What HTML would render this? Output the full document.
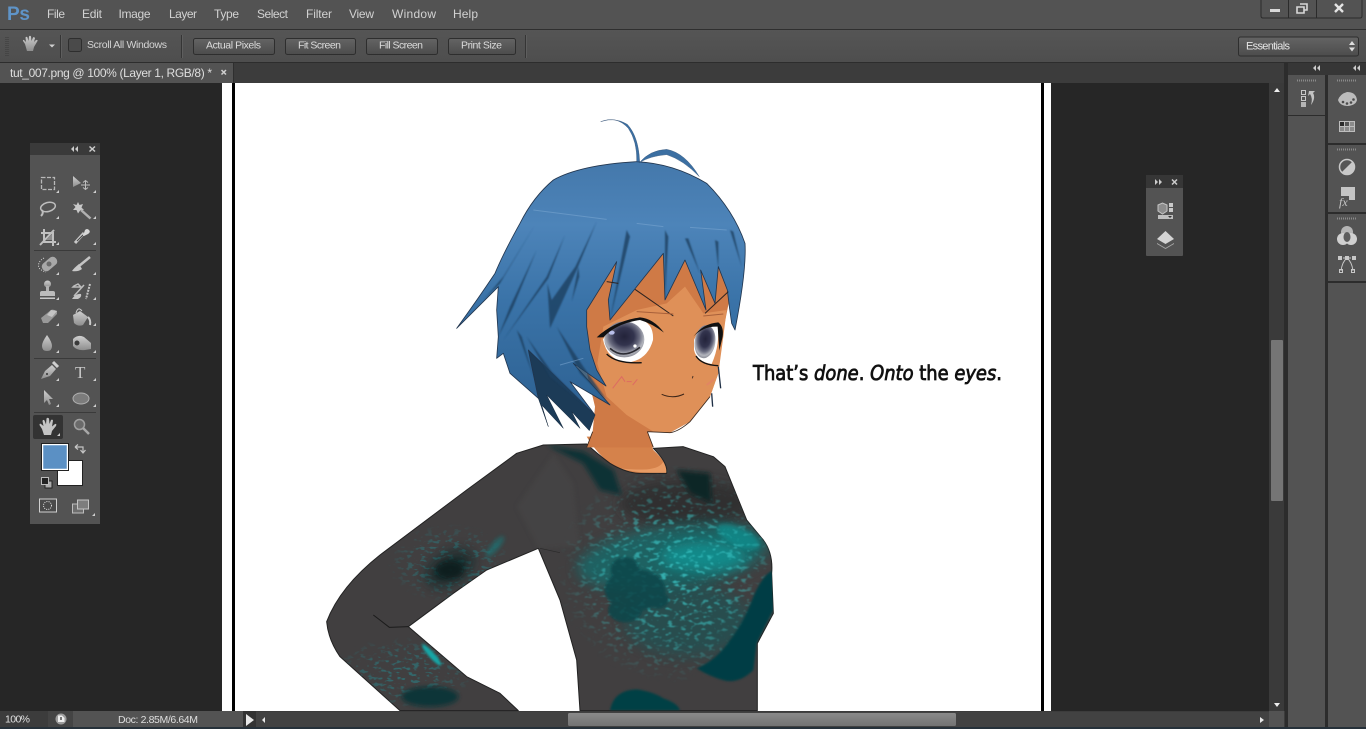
<!DOCTYPE html>
<html><head><meta charset="utf-8"><title>Photoshop</title>
<style>
html,body{margin:0;padding:0;background:#262626;width:1366px;height:729px;overflow:hidden}
svg{display:block;position:absolute;left:0;top:0}
text{font-family:"Liberation Sans",sans-serif}
</style></head><body>
<svg width="1366" height="729" viewBox="0 0 1366 729" xmlns="http://www.w3.org/2000/svg">
<defs>
<linearGradient id="hair" x1="0" y1="0" x2="0" y2="1"><stop offset="0" stop-color="#4478ab"/><stop offset=".25" stop-color="#4d84b9"/><stop offset=".55" stop-color="#3a73a8"/><stop offset="1" stop-color="#2d6192"/></linearGradient>
<linearGradient id="btn" x1="0" y1="0" x2="0" y2="1"><stop offset="0" stop-color="#646464"/><stop offset="1" stop-color="#4c4c4c"/></linearGradient>
<linearGradient id="opt" x1="0" y1="0" x2="0" y2="1"><stop offset="0" stop-color="#555"/><stop offset="1" stop-color="#4e4e4e"/></linearGradient>
<linearGradient id="ico" x1="0" y1="0" x2="0" y2="1"><stop offset="0" stop-color="#cfcfcf"/><stop offset="1" stop-color="#8e8e8e"/></linearGradient>
<linearGradient id="sh" x1="0" y1="0" x2="0" y2="1"><stop offset="0" stop-color="#8a8a8a"/><stop offset="1" stop-color="#737373"/></linearGradient>
<radialGradient id="iris" cx=".5" cy=".42" r=".58"><stop offset="0" stop-color="#23233a"/><stop offset=".42" stop-color="#33344e"/><stop offset=".66" stop-color="#6a6c80"/><stop offset=".85" stop-color="#b3b5bd"/><stop offset="1" stop-color="#8d8f99"/></radialGradient>
<radialGradient id="fade"><stop offset="0" stop-color="#fff"/><stop offset=".55" stop-color="#aaa"/><stop offset="1" stop-color="#000"/></radialGradient>
<filter id="b1" x="-30%" y="-30%" width="160%" height="160%"><feGaussianBlur stdDeviation="2.500"/></filter>
<filter id="b4" x="-30%" y="-30%" width="160%" height="160%"><feGaussianBlur stdDeviation="6"/></filter>
<filter id="b12" x="-40%" y="-40%" width="180%" height="180%"><feGaussianBlur stdDeviation="18"/></filter>
<filter id="b2" x="-20%" y="-20%" width="140%" height="140%"><feGaussianBlur stdDeviation="3"/></filter>
<filter id="spk" x="0" y="0" width="100%" height="100%"><feTurbulence type="fractalNoise" baseFrequency=".05 .09" numOctaves="2" seed="7"/><feColorMatrix type="matrix" values="0 0 0 0 .05  0 0 0 0 .62  0 0 0 0 .62  7 0 0 0 -3.900"/><feGaussianBlur stdDeviation="1.200"/></filter>
<filter id="spk2" x="0" y="0" width="100%" height="100%"><feTurbulence type="fractalNoise" baseFrequency=".05 .1" numOctaves="2" seed="3"/><feColorMatrix type="matrix" values="0 0 0 0 .03  0 0 0 0 .15  0 0 0 0 .16  8 0 0 0 -4.400"/><feGaussianBlur stdDeviation="1"/></filter>
<clipPath id="shirtclip"><path d="M670 15 590 40 440 150 180 345Q60 440 20 545 25 600 60 650L240 812H595L540 760 440 710 265 560 400 460 500 390 655 325 720 480 770 660 780 812H1312V610L1360 520 1355 400Q1360 340 1330 300L1280 240 1215 80 1180 50 1090 20 1000 25Q1045 70 1040 100H960Q920 100 870 70 830 40 800 12Z"/></clipPath>
<mask id="m1"><ellipse cx="1060" cy="400" rx="350" ry="330" fill="url(#fade)"/></mask>
<mask id="m2"><ellipse cx="390" cy="370" rx="190" ry="120" fill="url(#fade)"/><ellipse cx="250" cy="700" rx="220" ry="110" fill="url(#fade)"/></mask>
</defs>

<!-- canvas -->
<rect width="1366" height="729" fill="#262626"/>
<rect x="222" y="83" width="829" height="628" fill="#fff"/>
<rect x="232" y="83" width="3" height="628" fill="#000"/>
<rect x="1041" y="83" width="3" height="628" fill="#000"/>

<!-- shirt -->
<g transform="translate(320 440) scale(.33333)">
<path d="M800 -10Q830 40 870 70 920 100 960 102H1040Q1045 70 1000 30L985 -10Z" fill="#d5824b"/>
<path d="M900 85Q950 100 1040 100 1045 85 1030 65 1020 85 980 88 940 90 900 85Z" fill="#e89b64"/>
<path d="M670 15 590 40 440 150 180 345Q60 440 20 545 25 600 60 650L240 812H595L540 760 440 710 265 560 400 460 500 390 655 325 720 480 770 660 780 812H1312V610L1360 520 1355 400Q1360 340 1330 300L1280 240 1215 80 1180 50 1090 20 1000 25Q1045 70 1040 100H960Q920 100 870 70 830 40 800 12Z" fill="#413f40" stroke="#222" stroke-width="3" stroke-linejoin="round"/>
<g clip-path="url(#shirtclip)">
<path d="M700 40 760 130 780 320 655 325 590 200Z" fill="#4a4848" opacity=".45" filter="url(#b4)"/>
<ellipse cx="1100" cy="190" rx="200" ry="70" fill="#2a2a2b" opacity=".7" filter="url(#b12)"/>
<ellipse cx="1060" cy="350" rx="290" ry="95" fill="#0d7475" opacity=".65" filter="url(#b12)" transform="rotate(-8 1060 350)"/>
<ellipse cx="1150" cy="350" rx="130" ry="45" fill="#10a0a0" opacity=".65" filter="url(#b12)"/>
<ellipse cx="1255" cy="290" rx="70" ry="28" fill="#0f9393" opacity=".7" filter="url(#b4)" transform="rotate(25 1255 290)"/>
<ellipse cx="1100" cy="540" rx="190" ry="110" fill="#0b5f61" opacity=".45" filter="url(#b12)"/>
<g mask="url(#m1)"><rect x="640" y="0" width="730" height="812" filter="url(#spk)" opacity=".75"/></g>
<g mask="url(#m2)"><rect x="20" y="230" width="600" height="582" filter="url(#spk2)"/></g>
<g fill="#07474c" filter="url(#b2)" opacity=".88"><ellipse cx="915" cy="390" rx="42" ry="38"/><ellipse cx="945" cy="450" rx="90" ry="62"/><ellipse cx="915" cy="510" rx="50" ry="36"/><ellipse cx="1015" cy="480" rx="30" ry="24"/></g>
<path d="M1130 685Q1190 660 1230 600 1270 550 1300 470 1330 400 1362 390L1360 510 1310 610 1300 690Q1260 730 1215 722 1170 710 1130 685Z" fill="#063e44" filter="url(#b2)"/>
<path d="M870 812Q880 750 950 748 1000 755 1030 775 1075 790 1080 812Z" fill="#063f45" filter="url(#b2)"/>
<path d="M680 15 790 35 880 90 905 165 840 150 790 70Z" fill="#0d3336" filter="url(#b4)"/>
<path d="M1070 90 1170 100 1175 190 1110 160Z" fill="#112728" filter="url(#b4)"/>
<ellipse cx="390" cy="385" rx="75" ry="42" fill="#0c2628" opacity=".8" filter="url(#b12)" transform="rotate(-30 390 385)"/>
<ellipse cx="390" cy="390" rx="40" ry="26" fill="#071c1e" opacity=".8" filter="url(#b4)"/>
<ellipse cx="330" cy="770" rx="85" ry="30" fill="#0a3437" filter="url(#b4)"/>
<ellipse cx="525" cy="320" rx="40" ry="12" fill="#127a7c" opacity=".6" filter="url(#b4)" transform="rotate(-50 525 320)"/>
<ellipse cx="335" cy="645" rx="42" ry="9" fill="#12a5a5" filter="url(#b2)" transform="rotate(48 335 645)"/>
</g>
<path d="M160 525 208 562 265 560" fill="none" stroke="#1b1b1b" stroke-width="3"/>
<path d="M660 325 720 338" fill="none" stroke="#2a2a2a" stroke-width="2"/>
</g>

<!-- head -->
<g transform="translate(440 110) scale(.33333)">
<path d="M400 620 530 440 670 425 735 440 835 460 870 560 850 660 835 790 810 860 750 935 690 968 622 965 640 1012 440 1012 458 965 465 890Z" fill="#cf7a46"/>
<path d="M472 760 490 650 590 600 680 580 735 530 790 610 860 600 850 680 835 790 810 860 750 935 690 968 640 965 560 915 500 860Z" fill="#df9058"/>
<path d="M810 860 750 935Q715 965 690 968L622 965M622 965 640 1012M458 965 440 1012" fill="none" stroke="#3b2a20" stroke-width="2.500"/>
<path d="M265 720 295 865 325 950 305 885 370 955 320 855 420 955 395 905 448 962 465 915Z" fill="#1c3b57" stroke="#14273b" stroke-width="1.500"/>
<path d="M50 655Q115 565 165 490 190 430 240 340 280 260 340 210 420 165 590 155 700 160 800 220 880 300 915 400 920 480 885 660L875 640 868 590 862 540 835 470 825 580 782 480 798 600 735 450 675 570 670 430 590 530 510 630 505 570 530 455 440 600 440 650 450 720 470 780 498 828 400 760 510 885 390 815 465 915 265 720 295 865 210 790 190 730 170 745 175 680 170 600 175 530Z" fill="url(#hair)" stroke="#22364f" stroke-width="2.500" stroke-linejoin="round"/>
<path d="M482 35Q530 16 565 55 592 95 590 155L599 155Q596 80 562 43 525 20 482 35Z" fill="#3b6fa2" stroke="#27456a" stroke-width="1"/>
<path d="M598 158Q630 120 680 118 735 128 778 200 730 150 680 134 630 138 598 158Z" fill="#3b6fa2" stroke="#27456a" stroke-width="1"/>
<g fill="#1f3f60" opacity=".8" filter="url(#b1)">
<path d="M285 345 190 500 130 570 180 520Z"/><path d="M375 375 320 500 190 690 325 505Z"/><path d="M470 335 410 480 330 655 322 520 335 570 406 470Z"/><path d="M415 470 395 575 418 500Z"/><path d="M560 360 510 630 570 380Z"/><path d="M675 360 675 570 685 380Z"/><path d="M735 385 780 490 745 385Z"/><path d="M825 390 835 475 835 395Z"/><path d="M290 420 210 590 175 680 220 590Z"/><path d="M260 680 330 800 440 890 335 785Z"/><path d="M870 360 905 470 880 365Z"/><path d="M230 660 280 800 245 680Z"/><path d="M350 650 420 790 500 870 430 770Z"/>
</g>
<path d="M280 300 500 328M590 340 670 350M750 352 860 360M360 765 430 745" fill="none" stroke="#7ba8d2" stroke-width="3" opacity=".55"/>
<!-- face lines -->
<path d="M585 538 700 618M795 610 865 545M500 515 535 520" fill="none" stroke="#2d2320" stroke-width="3"/>
<path d="M590 605 700 612M790 618 850 612" fill="none" stroke="#a8603a" stroke-width="3"/>
<!-- left eye -->
<path d="M489 688Q515 640 600 628 642 640 639 690 622 752 560 758 500 748 489 688Z" fill="#fff"/>
<ellipse cx="553" cy="688" rx="60" ry="54" fill="url(#iris)"/>
<path d="M510 715Q550 750 600 712" fill="none" stroke="#2b2b33" stroke-width="5"/>
<circle cx="585" cy="708" r="5" fill="#fff"/><ellipse cx="515" cy="668" rx="9" ry="6" fill="#b9bfea"/>
<path d="M470 682Q520 635 600 622 640 625 672 668 635 640 600 630 530 640 490 682Z" fill="#111"/>
<path d="M500 732Q530 762 605 758" fill="none" stroke="#111" stroke-width="4"/>
<!-- right eye -->
<path d="M762 690Q780 645 832 642 842 700 815 762 770 755 762 720Z" fill="#fff"/>
<ellipse cx="795" cy="695" rx="31" ry="50" fill="url(#iris)" transform="rotate(8 795 695)"/>
<path d="M760 680Q790 640 835 637 852 650 848 680L838 722 833 650Q790 648 760 680Z" fill="#111"/>
<path d="M768 738Q785 765 835 767" fill="none" stroke="#111" stroke-width="4"/>
<path d="M835 770 842 835M815 850 818 890" stroke="#1f2f45" stroke-width="4"/>
<!-- blush, nose, mouth -->
<path d="M518 835 545 800 555 815M560 815 575 815M578 825 592 808" fill="none" stroke="#dd6b62" stroke-width="3"/>
<path d="M800 825 822 808" stroke="#e47f6a" stroke-width="6" opacity=".6"/>
<path d="M757 805 759 798" stroke="#4a3326" stroke-width="3"/>
<path d="M665 853Q700 868 732 852" fill="none" stroke="#3a2418" stroke-width="3"/>
</g>

<text x="753" y="380" font-size="20" fill="#111" stroke="#111" stroke-width=".8" textLength="249" lengthAdjust="spacingAndGlyphs" style="font-family:'DejaVu Sans',sans-serif">That’s <tspan font-style="italic">done</tspan>. <tspan font-style="italic">Onto</tspan> the <tspan font-style="italic">eyes</tspan>.</text>

<!-- top bars -->
<rect width="1366" height="29" fill="#535353"/>
<rect y="29" width="1366" height="1" fill="#2f2f2f"/>
<rect y="30" width="1366" height="32" fill="url(#opt)"/>
<rect y="62" width="1366" height="1" fill="#2d2d2d"/>
<rect y="63" width="1288" height="20" fill="#3c3c3c"/>
<rect y="63" width="233" height="20" fill="#535353"/>
<rect x="233" y="63" width="1" height="20" fill="#2f2f2f"/>

<text x="7" y="20" font-size="19" font-weight="bold" fill="#5f94c8" letter-spacing="-.3">Ps</text>
<g font-size="12" fill="#d2d2d2">
<text x="47" y="18" textLength="18">File</text><text x="82" y="18" textLength="20">Edit</text><text x="118.500" y="18" textLength="32">Image</text><text x="169" y="18" textLength="28">Layer</text><text x="214" y="18" textLength="25">Type</text><text x="257" y="18" textLength="31">Select</text><text x="306" y="18" textLength="26">Filter</text><text x="349" y="18" textLength="25">View</text><text x="392" y="18" textLength="44">Window</text><text x="453" y="18" textLength="25">Help</text>
</g>

<!-- window buttons -->
<path d="M1261 0V16Q1261 18 1263 18H1360Q1362 18 1362 16V0" fill="#535353" stroke="#2b2b2b"/>
<path d="M1288.500 0V18M1316.500 0V18" stroke="#2b2b2b"/>
<rect x="1270" y="9" width="10" height="3" fill="#d8d8d8"/>
<path d="M1297 7H1304V13H1297ZM1300 4H1307V10H1304" fill="none" stroke="#d8d8d8" stroke-width="1.600"/>
<path d="M1335 4 1343 12M1343 4 1335 12" stroke="#e4e4e4" stroke-width="2.400"/>

<!-- options bar -->
<path d="M6 37v19M8 37v19" stroke="#3a3a3a" stroke-dasharray="1 1" stroke-width="1"/>
<path d="M25 44 23 41Q22.500 39.500 24 40L26 42 25.500 37.500Q26.500 36 27.500 37.500L28.500 41 29 36.500Q30 35 31 36.500L31.500 41 33 37.500Q34 36.500 35 38L34 42 36 40Q38 39.500 37.500 41L34 47 33 51H27Z" fill="url(#ico)"/>
<path d="M49 44.500H55L52 47.500Z" fill="#d0d0d0"/>
<path d="M60.500 35V58" stroke="#353535"/><path d="M61.500 35V58" stroke="#5e5e5e"/>
<rect x="68.500" y="38.500" width="13" height="13" rx="2" fill="#4a4a4a" stroke="#2e2e2e"/>
<text x="87" y="48" font-size="10.500" fill="#d4d4d4" textLength="80">Scroll All Windows</text>
<path d="M181.500 35V58" stroke="#353535"/><path d="M182.500 35V58" stroke="#5e5e5e"/>
<g fill="url(#btn)" stroke="#2e2e2e">
<rect x="193.500" y="38.500" width="81" height="16" rx="2"/><rect x="285.500" y="38.500" width="70" height="16" rx="2"/><rect x="366.500" y="38.500" width="71" height="16" rx="2"/><rect x="448.500" y="38.500" width="67" height="16" rx="2"/>
</g>
<g font-size="10.500" fill="#dcdcdc">
<text x="206" y="48.500" textLength="55">Actual Pixels</text><text x="298" y="48.500" textLength="43">Fit Screen</text><text x="379" y="48.500" textLength="44">Fill Screen</text><text x="461" y="48.500" textLength="41">Print Size</text>
</g>
<path d="M525.500 35V58" stroke="#353535"/><path d="M526.500 35V58" stroke="#5e5e5e"/>
<rect x="1238.500" y="37" width="120" height="19" rx="2" fill="url(#btn)" stroke="#2e2e2e"/>
<text x="1246" y="49.500" font-size="11" fill="#e4e4e4" textLength="44">Essentials</text>
<path d="M1349 45 1352 41 1355 45ZM1349 47.500 1352 51.500 1355 47.500Z" fill="#ddd"/>

<!-- tab -->
<text x="10" y="77" font-size="12" fill="#dedede" textLength="202">tut_007.png @ 100% (Layer 1, RGB/8) *</text>
<path d="M221.500 70 226 74.500M226 70 221.500 74.500" stroke="#cfcfcf" stroke-width="1.500"/>

<!-- v scrollbar -->
<rect x="1269" y="83" width="15" height="628" fill="#3a3a3a"/>
<rect x="1271" y="340" width="12" height="161" rx="1" fill="#757575"/>
<path d="M1274 92 1277 88 1280 92Z" fill="#eee"/>
<path d="M1274 703H1280L1277 707Z" fill="#eee"/>

<!-- side panels -->
<rect x="1284" y="63" width="82" height="666" fill="#2c2c2c"/>
<rect x="1288" y="63" width="78" height="12" fill="#363636"/>
<rect x="1288" y="75" width="37" height="652" fill="#535353"/>
<rect x="1328" y="75" width="38" height="652" fill="#535353"/>
<rect x="1288" y="115" width="37" height="1" fill="#2c2c2c"/>
<g fill="#2c2c2c"><rect x="1328" y="143" width="38" height="2"/><rect x="1328" y="212" width="38" height="2"/><rect x="1328" y="281" width="38" height="2"/></g>
<path d="M1320 65V71L1317 68ZM1316 65V71L1313 68ZM1360 65V71L1357 68ZM1356 65V71L1353 68Z" fill="#ccc"/>
<g stroke="#8b8b8b" stroke-width="2" stroke-dasharray="1 1" fill="none">
<path d="M1297 80.500H1316M1337 80.500H1356M1337 149.500H1356M1337 218.500H1356"/>
<path d="M1155 193.500H1174M55 162H74"/>
</g>
<!-- history -->
<path d="M1301.500 90.500H1305.500V94.500H1301.500ZM1301.500 96.500H1305.500V100.500H1301.500Z" fill="none" stroke="#c8c8c8"/>
<rect x="1301" y="102" width="5" height="5" fill="#b5b5b5"/>
<path d="M1309 91H1315L1313 93Q1316 98 1311 105Q1313 98 1310 94L1308 96Z" fill="#c2c2c2"/>
<!-- palette -->
<path d="M1338 100Q1340 94 1347 92 1356 92 1357 100 1356 105 1348 106 1340 106 1338 100Z" fill="#bcbcbc"/>
<g fill="#4a4a4a"><circle cx="1343" cy="102" r="1.300"/><circle cx="1347" cy="103.500" r="1.300"/><circle cx="1351" cy="102.500" r="1.300"/><circle cx="1353.500" cy="99.500" r="1.300"/></g>
<!-- swatches -->
<rect x="1339.500" y="121.500" width="15" height="10" fill="#8a8a8a" stroke="#bdbdbd"/>
<path d="M1344.500 121V132M1349.500 121V132M1339 126.500H1355" stroke="#bdbdbd"/>
<rect x="1340" y="122" width="4" height="4" fill="#2a2a2a"/><rect x="1345" y="122" width="4" height="4" fill="#555"/>
<!-- adjustments -->
<circle cx="1347" cy="167" r="7.500" fill="#555" stroke="#c8c8c8" stroke-width="1.500"/>
<path d="M1352.300 161.700A7.500 7.500 0 0 1 1341.700 172.300Z" fill="#c8c8c8"/>
<!-- fx -->
<path d="M1341 187H1355V200H1349V196H1341Z" fill="#c4c4c4"/>
<text x="1339" y="206" font-size="12" font-style="italic" fill="#c8c8c8" style="font-family:'Liberation Serif',serif">fx</text>
<!-- channels -->
<circle cx="1347" cy="232" r="6" fill="#b5b5b5"/><circle cx="1343" cy="239" r="6" fill="#d0d0d0"/><circle cx="1351" cy="239" r="6" fill="#d0d0d0"/>
<ellipse cx="1347" cy="237" rx="3.500" ry="5" fill="#5c5c5c"/>
<!-- paths -->
<path d="M1343 258H1351M1347 258Q1342 262 1341 271M1347 258Q1352 262 1353 271" fill="none" stroke="#c8c8c8"/>
<path d="M1338 256h4v4h-4zM1352 256h4v4h-4zM1345 256h4v4h-4z" fill="#c8c8c8"/>
<path d="M1339.500 269.500h3v3h-3zM1351.500 269.500h3v3h-3z" fill="none" stroke="#c8c8c8"/>

<!-- floating panel -->
<rect x="1146" y="175" width="37" height="81" rx="1" fill="#535353"/>
<rect x="1146" y="175" width="37" height="13" fill="#363636"/>
<path d="M1155 179V185L1158 182ZM1159 179V185L1162 182Z" fill="#ccc"/>
<path d="M1172 179.500 1177 184.500M1177 179.500 1172 184.500" stroke="#ccc" stroke-width="1.500"/>
<path d="M1158 205 1162.500 203 1167 205V211L1162.500 214 1158 211Z" fill="#8c8c8c" stroke="#c4c4c4"/>
<path d="M1169 203H1173V207H1169ZM1169 208H1173V212H1169Z" fill="#c9c9c9"/>
<rect x="1158" y="215" width="15" height="4" fill="#bfbfbf"/><path d="M1168 216H1172L1170 218Z" fill="#333"/>
<path d="M1157 243 1165.500 248 1174 243 1174 244 1165.500 249 1157 244Z" fill="#a8a8a8"/>
<path d="M1157 239 1165.500 231 1174 239 1165.500 244Z" fill="#d4d4d4"/>

<!-- toolbox -->
<rect x="30" y="143" width="70" height="381" fill="#535353"/>
<rect x="30" y="143" width="70" height="12" fill="#3a3a3a"/>
<path d="M78 146V152L75 149ZM74 146V152L71 149Z" fill="#ccc"/>
<path d="M89.500 146.500 95 151.500M95 146.500 89.500 151.500" stroke="#ccc" stroke-width="1.500"/>
<g stroke="#3a3a3a" fill="none"><path d="M34 250.500H96M34 358.500H96M34 412.500H96"/></g>
<rect x="33" y="415" width="30" height="24" rx="2" fill="#333"/>
<!-- corner marks -->
<path d="M56 193h3v-3zM93 193h3v-3zM56 219h3v-3zM93 219h3v-3zM56 245h3v-3zM93 245h3v-3zM56 275h3v-3zM93 275h3v-3zM56 300h3v-3zM93 300h3v-3zM56 326h3v-3zM93 326h3v-3zM56 353h3v-3zM93 353h3v-3zM56 381h3v-3zM93 381h3v-3zM56 407h3v-3zM93 407h3v-3zM57 436h3v-3zM92 516h3v-3z" fill="#cfcfcf"/>
<!-- marquee -->
<rect x="41.500" y="177.500" width="13" height="12" fill="none" stroke="#b9b9b9" stroke-width="1.300" stroke-dasharray="4 1.500"/>
<!-- move -->
<path d="M73 176 81 183 73 187Z" fill="url(#ico)"/>
<path d="M81 185H90M85.500 180.500V189.500M83 182.500 85.500 180.500 88 182.500M83 187.500 85.500 189.500 88 187.500" fill="none" stroke="#bdbdbd"/>
<!-- lasso -->
<ellipse cx="48" cy="207" rx="7.500" ry="4.500" transform="rotate(-15 48 207)" fill="none" stroke="#bdbdbd" stroke-width="1.500"/>
<path d="M42 210Q44 213 41 216" fill="none" stroke="#bdbdbd" stroke-width="2"/>
<!-- wand -->
<path d="M78 202 79.500 205 83 204 81.500 207.500 84 210 80.500 210 78 213.500 76.500 210 73 210 75.500 207 73 204 76.500 205Z" fill="#c8c8c8"/>
<path d="M81 210 90.500 218.500" stroke="#b0b0b0" stroke-width="2.500"/>
<!-- crop -->
<path d="M44 229V242H56M41 233H53V246M40 245 54 230" fill="none" stroke="#c0c0c0" stroke-width="2"/>
<path d="M46 240 52 234V240Z" fill="#8e8e8e"/>
<!-- eyedropper -->
<path d="M75 243 84 233" stroke="#c8c8c8" stroke-width="3"/>
<path d="M77 241 83 235" stroke="#444" stroke-width="1"/>
<path d="M83 236 85 230Q87 228 89 230 91 232 88 234L84 236Z" fill="#d8d8d8"/>
<!-- healing -->
<rect x="41" y="259.500" width="17" height="9" rx="4" transform="rotate(-40 49.500 264)" fill="#a8a8a8"/>
<circle cx="49" cy="264" r="2.500" fill="#6b6b6b"/>
<path d="M44 258Q37 262 39 268 42 271 46 272" fill="none" stroke="#ddd" stroke-dasharray="1 1.500"/>
<!-- brush -->
<path d="M90 257 79 266" stroke="#c4c4c4" stroke-width="2.500"/>
<path d="M79 264Q74 268 72 271 78 272 82 269Z" fill="#c8c8c8"/>
<!-- stamp -->
<circle cx="47.500" cy="284" r="3.500" fill="url(#ico)"/><rect x="46" y="286" width="3" height="5" fill="#b2b2b2"/>
<path d="M40 296V293Q40 291 42 291H53Q55 291 55 293V296Z" fill="#bcbcbc"/><rect x="40" y="297.500" width="15" height="1.500" fill="#c8c8c8"/>
<!-- history brush -->
<path d="M73 287H81L78 284 74 286ZM84 285 74 296" fill="none" stroke="#bdbdbd" stroke-width="1.500"/>
<path d="M72 299Q76 293 81 294 82 297 78 299Z" fill="#c4c4c4"/>
<path d="M90 284 86 299" stroke="#c4c4c4" stroke-width="2" stroke-dasharray="2 1"/>
<!-- eraser -->
<path d="M41 318 51 310Q53 309 57 311V314L48 323 43 323Z" fill="#999"/><path d="M47 315 51 310 57 311 52 317Z" fill="#c4c4c4"/>
<!-- bucket -->
<path d="M73 315 80 311 88 317 83 325Q78 327 74 323Z" fill="url(#ico)"/><path d="M76 313Q78 306 82 311" fill="none" stroke="#ccc"/><path d="M88 317Q91 320 90 325" fill="none" stroke="#ccc" stroke-width="2"/>
<!-- blur -->
<path d="M47 335Q52 342 52 346 52 351 47 351 42 351 42 346 42 342 47 335Z" fill="url(#ico)"/>
<!-- smudge -->
<path d="M73 339Q78 334 84 337L91 343 91 349 85 350Q77 351 73 346Z" fill="url(#ico)"/><circle cx="77" cy="343" r="2.500" fill="#3a3a3a"/>
<!-- pen -->
<path d="M41 379 45 371 52 365 56 369 50 376Z" fill="url(#ico)"/><path d="M53 362 58 367" stroke="#d0d0d0" stroke-width="3"/><circle cx="47" cy="374" r="1" fill="#333"/>
<!-- type -->
<text x="75" y="378" font-size="17" fill="#c6c6c6" style="font-family:'Liberation Serif',serif">T</text>
<!-- path select -->
<path d="M44 390 44 403 47 400 49 405 51 404 49 399 53 399Z" fill="url(#ico)"/>
<!-- ellipse -->
<ellipse cx="81" cy="398.500" rx="8" ry="5.500" fill="#7c7c7c" stroke="#b0b0b0"/>
<!-- hand -->
<path d="M42 429 39.500 425Q39.500 423 41 424L43.500 426 42.500 421Q43 419 44.500 420.500L46 424.500 46.500 418.500Q47.500 417 49 418.500L49.500 424 51 420Q52.500 419 53 420.500L52 426.500 55 424Q57 423.500 56 426L52 431 51 435H44Z" fill="#c4c4c4"/>
<!-- zoom -->
<circle cx="79.500" cy="424.500" r="5" fill="#6a6a6a" stroke="#a0a0a0" stroke-width="1.500"/>
<path d="M83 428 89 434" stroke="#a8a8a8" stroke-width="2.500"/>
<!-- colours -->
<rect x="57.500" y="460.500" width="25" height="25" fill="#fff" stroke="#222"/>
<rect x="42.500" y="444.500" width="25" height="25" fill="#5b90c4" stroke="#fff" stroke-width="1.500"/>
<rect x="41.500" y="443.500" width="27" height="27" fill="none" stroke="#222"/>
<path d="M75 447H83V452M75 447 78 444.500M75 447 78 449.500M80.500 450 83 453 85.500 450" fill="none" stroke="#c4c4c4" stroke-width="1.200"/>
<rect x="45" y="481" width="7" height="7" fill="#aaa" stroke="#222"/>
<rect x="41.500" y="477.500" width="7" height="7" fill="#222" stroke="#bbb"/>
<!-- quick mask -->
<rect x="39.500" y="499" width="17" height="13" fill="#4a4a4a" stroke="#d0d0d0" stroke-width="1"/>
<circle cx="47.500" cy="505.500" r="4" fill="none" stroke="#e0e0e0" stroke-dasharray="1 1.200"/>
<!-- screen mode -->
<rect x="72.500" y="504" width="11" height="9" fill="#6d6d6d" stroke="#bdbdbd"/>
<rect x="77.500" y="500" width="11" height="9" fill="#7d7d7d" stroke="#c4c4c4"/>

<!-- status bar -->
<rect y="711" width="1285" height="16" fill="#3c3c3c"/>
<rect x="48" y="711" width="25" height="16" fill="#444"/>
<rect x="73" y="711" width="170" height="16" fill="#535353"/>
<rect x="243" y="711" width="13" height="16" fill="#333"/>
<rect x="1269" y="711" width="15" height="16" fill="#535353"/>
<rect x="256" y="712" width="1013" height="15" fill="#424242"/>
<rect x="568" y="713" width="388" height="13" rx="1.500" fill="url(#sh)"/>
<text x="5" y="722.500" font-size="10.500" fill="#e0e0e0" textLength="25">100%</text>
<circle cx="61" cy="719" r="5.500" fill="#9c9c9c"/><path d="M58 715.500H62L64.500 718V722H58Z" fill="#eee"/><path d="M60 717H62V720H60Z" fill="#777"/>
<text x="118" y="723" font-size="10.500" fill="#dedede" textLength="80">Doc: 2.85M/6.64M</text>
<path d="M246 714V726L254 720Z" fill="#e8e8e8"/>
<path d="M265 717V723L262 720Z" fill="#e8e8e8"/>
<path d="M1260 717V723L1264 720Z" fill="#e8e8e8"/>
<rect y="727" width="1366" height="2" fill="#26313a"/>
</svg>
</body></html>
